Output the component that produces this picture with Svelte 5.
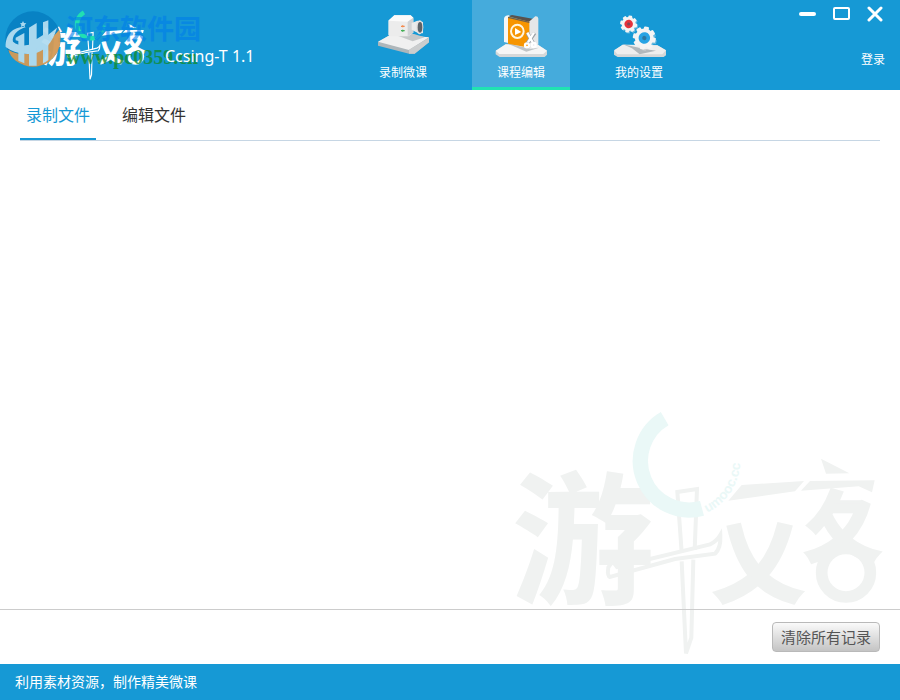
<script>
    const navItems = [
        { id: "record", label: "录制微课" },
        { id: "course", label: "课程编辑" },
        { id: "settings", label: "我的设置" }
    ];

    const tabs = [
        { id: "recorded", label: "录制文件" },
        { id: "edited", label: "编辑文件" }
    ];

    // angles of the eight teeth on a gear
    const teeth = [0, 45, 90, 135, 180, 225, 270, 315];

    let activeNav = $state("course");
    let activeTab = $state("recorded");
</script>

{#snippet logo(kind)}
    <svg class="logo {kind}" viewBox="0 0 1200 792" aria-hidden="true">
        <g class="ink">
            <text class="you" x="34" y="580">游</text>
            <text class="yi" x="640" y="582">乂</text>
            <text class="ke" x="912" y="464">夂</text>

            <path d="M685 302L725 255L912 243L885 274Z" />
            <path d="M903 272L930 243L1124 241L1116 277L1076 259Z" />
            <path d="M963 176L1048 220L978 221Z" />
        </g>
        <circle class="ring" cx="1038" cy="518" r="73" />
        <g class="sword">
            <path d="M545 456L532 276L591 267L584 450" />
            <path d="M325 502L338 484L351 501L630 433Q650 424 661 405Q663 445 645 461L525 477L330 531Q321 528 325 502Z" />
            <path d="M545 484L558 760L574 713L580 479" />
        </g>
        <path class="arc" d="M494 56A147 147 0 0 0 606 325" />
        <path id="{kind}-curve" class="curve" d="M622 338A176 176 0 0 0 721 178" />
        <text class="site"><textPath href="#{kind}-curve">umooc.cc</textPath></text>
    </svg>
{/snippet}

{#snippet gear(cx, cy, size, kind)}
    <g transform="translate({cx} {cy}) rotate(12) scale({size})">
        {#each teeth as angle}
            <rect x="-7" y="-32" width="14" height="14" rx="3" fill="#f4f4f4" transform="rotate({angle})" />
        {/each}
        <circle r="26" fill="#f4f4f4" />
        <circle r="16" class={kind} />
        <circle r="6" fill="#35536a" opacity=".55" />
    </g>
{/snippet}

<div class="window">
    <header>
        <div class="brand">
            {@render logo("small")}
            <div class="stamp">
                <svg viewBox="0 0 168 168" aria-hidden="true">
                    <circle cx="84" cy="84" r="83" fill="#0881c4" />
                    <path d="M10 116Q60 146 116 108L163 56Q178 117 130 154Q80 183 32 149Q14 134 10 116Z" fill="#d49955" />
                    <path d="M2 108C0 65 31 45 63 48C34 56 20 77 24 92Q62 122 128 73L156 50Q136 119 83 128Q35 133 2 108Z" fill="#b2dcf0" />
                    <path d="M32 80L58 66V157L40 149V90L32 88Z" fill="#b2dcf0" />
                    <path d="M72 50L95 36V84L114 72V34L130 28V147Q124 152 114 157V98L95 110V164H72Z" fill="#b2dcf0" />
                    <path d="M54 30L57 36L64 37L59 42L60 49L54 45L48 48L49 41L45 37L51 36Z" fill="#b2dcf0" />
                </svg>
                <div class="stamp-text">
                    <span class="stamp-name">河东软件园</span>
                    <span class="stamp-site">www.pc0359.cn</span>
                </div>
            </div>
            <h1>Ccsing-T 1.1</h1>
        </div>

        <nav>
            {#each navItems as item (item.id)}
                <button
                    class="nav-item"
                    class:active={activeNav === item.id}
                    onclick={() => (activeNav = item.id)}
                >
                    {#if item.id === "record"}
                        <svg viewBox="33 36 162 135" aria-hidden="true">
                            <path d="M39 126L79 103L192 112V127L149 161H132L39 137Z" fill="#aeb6ba" />
                            <path d="M39 125L79 103L192 112L132 150Z" fill="#f0f0f0" />
                            <path d="M132 149L192 113V127L149 161H132Z" fill="#cbcdce" />
                            <path d="M84 102L147 102L179 112L143 124Z" fill="#c6c8c9" />
                            <path d="M88 46H137L145 53V98L130 109H73L70 103V62Z" fill="#ececec" />
                            <path d="M88 46H137L145 53L128 65L70 62Z" fill="#fbfbfb" />
                            <path d="M128 65L145 53V98L128 109Z" fill="#cfd2d4" />
                            <path d="M140 69L157 62L174 66V100L154 97L140 89Z" fill="#e9eaea" />
                            <ellipse cx="164" cy="82" rx="11" ry="21" fill="#e2e2e2" />
                            <ellipse cx="165" cy="82" rx="7" ry="16" fill="#5d6368" />
                            <path d="M108 79H119M113 76V82" stroke="#f38a4e" stroke-width="4" />
                            <path d="M108 92H119M113 89V95" stroke="#43af54" stroke-width="4" />
                        </svg>
                    {:else if item.id === "course"}
                        <svg viewBox="78 36 162 135" aria-hidden="true">
                            <path d="M83 153L113 133L211 135L237 152V164L230 171H95L83 163Z" fill="#d6d8d9" />
                            <path d="M83 152L113 133L211 135L237 152L226 162H94Z" fill="#f6f6f6" />
                            <path d="M117 130L188 146L213 143L175 155Z" fill="#bfc4c6" />
                            <path d="M121 49L132 45L202 58L184 66Z" fill="#59524d" />
                            <path d="M183 65L202 49Q210 48 211 56V134L184 145Z" fill="#e5e7e8" />
                            <path d="M108 55Q111 45 124 46V130L108 126Z" fill="#f7f7f7" />
                            <path d="M120 50L184 65V143L120 131Z" fill="#f79500" />
                            <path d="M120 50L184 65V69L120 54Z" fill="#70604c" />
                            <ellipse cx="148" cy="94" rx="19" ry="20" fill="none" stroke="#fff5dc" stroke-width="6" />
                            <path d="M141 84L160 96L141 105Z" fill="#fff" />
                            <g fill="none" stroke="#9aa1a6" stroke-width="11">
                                <path d="M178 99L196 130M200 99L178 130" />
                            </g>
                            <g fill="none" stroke="#fff" stroke-width="7">
                                <path d="M178 98L194 127M198 98L180 127" />
                                <circle cx="177" cy="136" r="6" />
                                <circle cx="197" cy="135" r="6" />
                            </g>
                        </svg>
                    {:else}
                        <svg viewBox="66 36 162 135" aria-hidden="true">
                            <path d="M72 153L98 134L202 136L228 151V166L221 171H83L72 164Z" fill="#d5d7d8" />
                            <path d="M72 151L98 134L202 136L228 151L217 163H82Z" fill="#eeeeee" />
                            <path d="M99 133L161 146L198 152L149 163L126 145Z" fill="#b2b8bc" />
                            <g opacity=".35">
                                {@render gear(119, 75, 0.8, "shade")}
                                {@render gear(168, 120, 1, "shade")}
                            </g>
                            {@render gear(116, 72, 0.8, "red")}
                            {@render gear(163, 114, 1.08, "blue")}
                        </svg>
                    {/if}
                    <span>{item.label}</span>
                </button>
            {/each}
        </nav>

        <div class="account">
            <div class="controls">
                <button aria-label="最小化">
                    <svg viewBox="0 0 18 18"><path d="M2 9H15" stroke-width="4" /></svg>
                </button>
                <button aria-label="最大化">
                    <svg viewBox="0 0 18 18"><rect x="1" y="3" width="15" height="11" rx="1" stroke-width="2" /></svg>
                </button>
                <button aria-label="关闭">
                    <svg viewBox="0 0 18 18"><path d="M2 3L14 15M14 3L2 15" stroke-width="3" /></svg>
                </button>
            </div>
            <a class="login" href="#login">登录</a>
        </div>
    </header>

    <div class="content">
        {@render logo("watermark")}

        <main>
            <div class="tabs" role="tablist">
                {#each tabs as tab (tab.id)}
                    <button
                        role="tab"
                        aria-selected={activeTab === tab.id}
                        class:active={activeTab === tab.id}
                        onclick={() => (activeTab = tab.id)}
                    >{tab.label}</button>
                {/each}
            </div>
        </main>

        <div class="actions">
            <button>清除所有记录</button>
        </div>
    </div>

    <footer>利用素材资源，制作精美微课</footer>
</div>

<style>
    :global(body) {
        background: #fff;
    }

    .window {
        display: flex;
        flex-direction: column;
        min-height: 100vh;

        color: #333;
        font-family: "Noto Sans", "Noto Sans CJK SC", sans-serif;
        font-size: 14px;
    }

    button {
        padding: 0;
        border: 0;

        background: none;
        color: inherit;
        font: inherit;
        cursor: pointer;
    }

    header {
        display: flex;
        height: 90px;

        background: #1699d5;
        color: #fff;
    }

    .brand {
        position: relative;
        flex: 0 0 354px;
        box-sizing: border-box;
        padding: 45px 0 0 165px;
    }

    h1 {
        position: relative;
        margin: 0;

        font-size: 16px;
        font-weight: 400;
        line-height: 22px;
    }

    .logo {
        position: absolute;
        font-family: "Noto Sans CJK SC", sans-serif;
        font-weight: 700;
    }

    .small {
        left: 37px;
        top: 7px;
        width: 114px;

        --ink: #fff;
        --arc: #20dfb2;
    }

    .watermark {
        right: 0;
        bottom: 0;
        width: 400px;
        pointer-events: none;

        --ink: #f0f2f1;
        --arc: #eaf8f7;
    }

    .ink {
        fill: var(--ink);
    }

    .you {
        font-size: 430px;
    }

    .yi {
        font-size: 270px;
        stroke: var(--ink);
        stroke-width: 10px;
    }

    .ke {
        font-size: 230px;
        stroke: var(--ink);
        stroke-width: 10px;
    }

    .ring {
        fill: none;
        stroke: var(--ink);
        stroke-width: 35px;
    }

    .sword {
        fill: none;
        stroke: var(--ink);
        stroke-width: 12px;
    }

    .arc {
        fill: none;
        stroke: var(--arc);
        stroke-width: 46px;
    }

    .curve {
        fill: none;
    }

    .site {
        fill: var(--arc);
        font-family: "Liberation Sans", sans-serif;
        font-size: 40px;
    }

    /* download site stamp over the logo */
    .stamp {
        position: absolute;
        left: 5px;
        top: 11px;

        display: flex;
        gap: 5px;
    }

    .stamp svg {
        width: 56px;
        height: 56px;
        opacity: .95;
    }

    .stamp-text {
        display: flex;
        flex-direction: column;
        font-weight: 700;
    }

    .stamp-name {
        color: #007eea;
        font-size: 27px;
        line-height: 35px;
        opacity: .6;
    }

    .stamp-site {
        color: #128c32;
        font-family: "Liberation Serif", serif;
        font-size: 20px;
        line-height: 22px;
        opacity: .8;
    }

    nav {
        display: flex;
        gap: 20px;
    }

    .nav-item {
        display: flex;
        flex-direction: column;
        align-items: center;
        box-sizing: border-box;
        width: 98px;
        padding-top: 12px;
        border-bottom: 3px solid transparent;

        font-size: 12px;
        line-height: 18px;
    }

    .nav-item.active {
        border-color: #20e3b2;
        background: #45abdc;
    }

    .nav-item svg {
        width: 54px;
        height: 45px;
        margin-bottom: 7px;
    }

    .red {
        fill: #e5323b;
    }

    .blue {
        fill: #27a3e4;
    }

    .shade {
        fill: #555;
    }

    .account {
        display: flex;
        flex-direction: column;
        align-items: flex-end;
        margin-left: auto;
        padding: 5px 15px 0 0;
    }

    .controls {
        display: flex;
        gap: 16px;
    }

    .controls button {
        height: 18px;
    }

    .controls svg {
        display: block;
        width: 18px;
        height: 18px;

        fill: none;
        stroke: #fff;
        stroke-linecap: round;
    }

    .login {
        margin-top: 28px;

        color: #fff;
        font-size: 12px;
        line-height: 18px;
        text-decoration: none;
    }

    .content {
        position: relative;
        flex: 1;

        display: flex;
        flex-direction: column;
    }

    main {
        position: relative;
        flex: 1;
        padding: 0 20px;
    }

    .tabs {
        display: flex;
        gap: 20px;
        border-bottom: 1px solid #c6d6e4;
    }

    .tabs button {
        height: 50px;
        padding: 0 6px;
        border-bottom: 2px solid transparent;

        font-size: 16px;
    }

    .tabs .active {
        border-color: #1699d5;
        color: #1699d5;
    }

    .actions {
        position: relative;

        display: flex;
        justify-content: flex-end;
        padding: 12px 20px;
        border-top: 1px solid #ccc;
    }

    .actions button {
        height: 30px;
        padding: 0 8px;
        border: 1px solid #b9b9b9;
        border-radius: 4px;

        background: linear-gradient(#fafafa, #c4c4c4);
        color: #555;
        font-size: 15px;
        line-height: 26px;
    }

    footer {
        padding: 0 15px;

        background: #1699d5;
        color: #fff;
        line-height: 36px;
    }
</style>
